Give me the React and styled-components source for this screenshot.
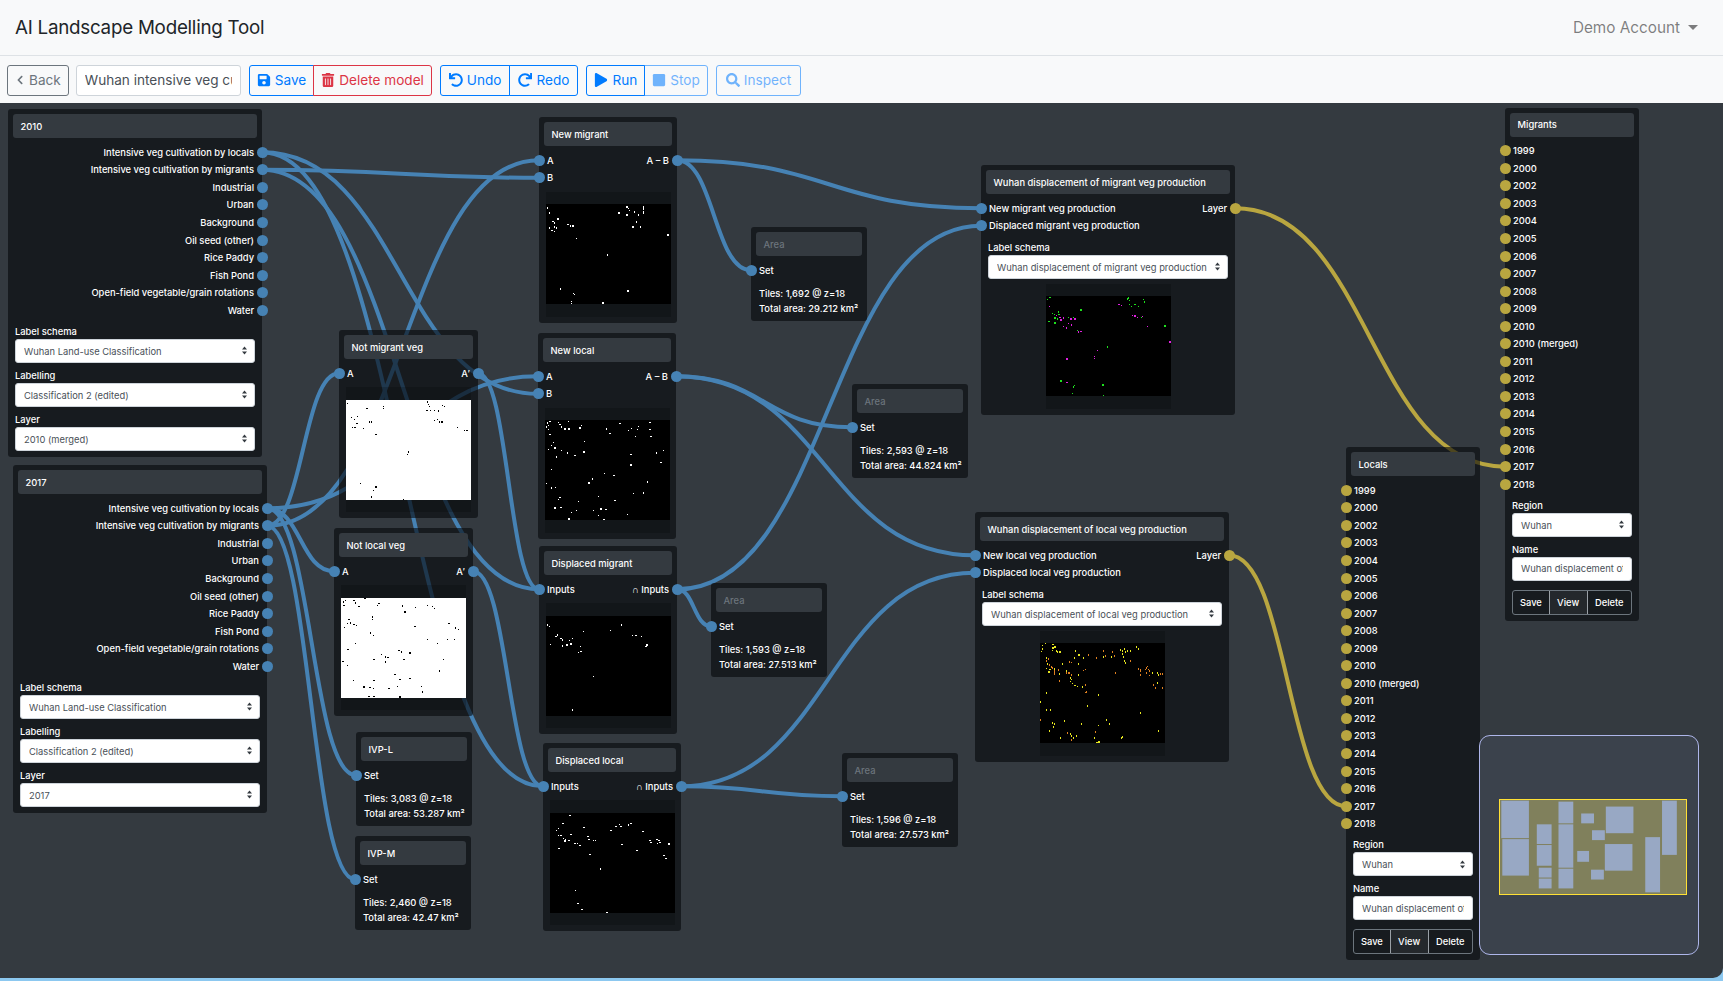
import React from 'react'
import styled, { createGlobalStyle } from 'styled-components'
import { FaChevronLeft, FaSave, FaTrashAlt, FaUndo, FaRedo, FaPlay, FaStop, FaSearch } from 'react-icons/fa'

const CANVAS_TOP = 103
const ROW_H = 17.55
const BLUE = '#4682b4'
const GOLD = '#b9a640'

const GlobalStyle = createGlobalStyle`
  * { box-sizing: border-box; }
  html, body { margin: 0; height: 100%; overflow: hidden; }
  body {
    font-family: Inter, "Liberation Sans", Arial, sans-serif;
    background: #8cc8f0;
  }
`

const Page = styled.div`
  height: 100vh;
  display: flex;
  flex-direction: column;
  padding-bottom: 3px;
`

const Navbar = styled.nav`
  height: 56px;
  flex: none;
  display: flex;
  align-items: center;
  justify-content: space-between;
  padding: 0 25px 1px 15px;
  background: #f8f9fa;
  border-bottom: 1px solid #dee2e6;
`

const Brand = styled.div`
  font-size: 18.8px;
  letter-spacing: -0.25px;
  color: #212529;
`

const Account = styled.div`
  font-size: 15.3px;
  color: rgba(0, 0, 0, 0.5);
  display: flex;
  align-items: center;
  gap: 8px;

  &::after {
    content: '';
    border-top: 5px solid rgba(0, 0, 0, 0.5);
    border-left: 5px solid transparent;
    border-right: 5px solid transparent;
  }
`

const Toolbar = styled.div`
  height: 47px;
  flex: none;
  display: flex;
  align-items: center;
  gap: 8px;
  padding: 1px 7px 0;
  background: #f8f9fa;
`

const Group = styled.div`
  display: flex;
`

const Button = styled.button`
  height: 31px;
  display: flex;
  align-items: center;
  gap: 4px;
  padding: 0 ${p => p.$pad || 7}px;
  font: inherit;
  font-size: 13.6px;
  background: transparent;
  color: ${p => p.$color || '#007bff'};
  border: 1px solid ${p => p.$color || '#007bff'};
  border-radius: 3px;
  opacity: ${p => (p.$off ? 0.55 : 1)};

  svg { font-size: ${p => p.$icon || 14}px; }

  ${Group} > & { border-radius: 0; }
  ${Group} > &:first-child { border-radius: 3px 0 0 3px; }
  ${Group} > &:last-child { border-radius: 0 3px 3px 0; margin-left: -1px; }
`

const NameInput = styled.input`
  width: 165px;
  height: 31px;
  margin-left: -1px;
  padding: 0 8px;
  font: inherit;
  font-size: 13.6px;
  color: #495057;
  background: #fff;
  border: 1px solid #ced4da;
  border-radius: 3px;
`

const Canvas = styled.main`
  flex: 1;
  position: relative;
  overflow: hidden;
  background: #343a40;
  border-bottom-right-radius: 10px;
`

const Wires = styled.svg`
  position: absolute;
  inset: 0;
  width: 100%;
  height: 100%;
`

const NodeBox = styled.section`
  position: absolute;
  left: ${p => p.$x}px;
  top: ${p => p.$y - CANVAS_TOP}px;
  width: ${p => p.$w}px;
  padding: 5px 0 6px;
  background: rgba(5, 6, 10, 0.6);
  border-radius: 3px;
  color: #fff;
  font-size: 9.35px;
  font-weight: 500;
`

const NodeTitle = styled.div`
  height: 24px;
  margin: 0 5px 5.5px;
  padding-left: 7.5px;
  display: flex;
  align-items: center;
  background: #343a40;
  border-radius: 3px;
  color: ${p => (p.$placeholder ? '#6c757d' : '#fff')};
`

const Row = styled.div`
  position: relative;
  height: ${ROW_H}px;
  display: flex;
  align-items: center;
  justify-content: ${p => p.$right ? 'flex-end' : 'space-between'};
  padding: 0 8px;
  white-space: nowrap;
`

const Handle = styled.span`
  position: absolute;
  top: 50%;
  ${p => p.$side}: -5.5px;
  width: 11px;
  height: 11px;
  margin-top: -5.5px;
  border-radius: 50%;
  background: ${p => p.$gold ? GOLD : BLUE};
`

const Fields = styled.div`
  margin: 5px 7px 0;
  display: flex;
  flex-direction: column;
  gap: 5px;
`

const Field = styled.label`
  display: flex;
  flex-direction: column;
`

const FieldLabel = styled.span`
  height: 15px;
  line-height: 15px;
`

const SelectWrap = styled.div`
  position: relative;
`

const Select = styled.select`
  width: 100%;
  height: 24px;
  padding: 1px 18px 0 8px;
  appearance: none;
  font: inherit;
  font-weight: 400;
  color: #495057;
  background: #fff;
  border: 1px solid #ced4da;
  border-radius: 3px;
`

const Arrows = styled.svg`
  position: absolute;
  right: 8px;
  top: 7.5px;
  width: 5px;
  height: 9px;
  pointer-events: none;
`

const TextInput = styled.input`
  width: 100%;
  height: 24px;
  padding: 0 8px;
  font: inherit;
  font-weight: 400;
  color: #495057;
  background: #fff;
  border: 1px solid #ced4da;
  border-radius: 3px;
`

const Actions = styled.div`
  margin: 9px 7px 0;
  height: 25px;
  display: flex;
  border: 1px solid #6c757d;
  border-radius: 3px;
  overflow: hidden;
`

const Action = styled.button`
  flex: ${p => p.$grow};
  padding: 0;
  font: inherit;
  color: #fff;
  background: ${p => (p.$active ? '#24282c' : 'transparent')};
  border: 0;
  border-left: ${p => (p.$first ? '0' : '1px solid #9aa0a6')};
`

const Thumb = styled.div`
  width: 125px;
  height: 125px;
  margin: 5px auto 0;
  display: flex;
  align-items: center;
  background: rgba(0, 0, 0, 0.18);
`

const ThumbImage = styled.svg`
  display: block;
  width: 125px;
  height: 100px;
`

const Stats = styled.div`
  margin: 7px 8px -1.5px;
  line-height: 15px;
  white-space: nowrap;
`

const Minimap = styled.aside`
  position: absolute;
  left: 1479px;
  top: ${735 - CANVAS_TOP}px;
  width: 220px;
  height: 220px;
  display: flex;
  align-items: center;
  justify-content: center;
  padding: 3px 0 0 8px;
  background: #3b424c;
  border: 1px solid #aeb6ea;
  border-radius: 11px;
`

const MiniFrame = styled.svg`
  display: block;
  width: 188px;
  height: 96px;
  background: #80805c;
  border: 1px solid #ffe135;
`

// dots traced off the reference at 3x, so one map pixel is 3 units here
const trace = (ox, oy, pts) => pts.map(([x, y]) => [x - ox, y - oy])

const thumbs = {
  newMigrant: { bg: '#000', dots: [['#fff', trace(46, 285, [[48,295],[55,310],[65,335],[70,340],[80,328],[55,355],[70,352],[75,355],[62,362],[70,366],[110,345],[118,349],[125,349],[136,386],[229,436],[263,310],[287,292],[292,296],[295,302],[287,316],[310,307],[322,316],[337,292],[337,298],[337,305],[337,310],[316,337],[305,352],[328,352],[408,376],[412,376],[88,538],[127,552],[130,555],[120,575],[120,582],[215,580],[290,544]])]] },
  newLocal: { bg: '#000', dots: [['#fff', trace(642, 303, [[648,310],[650,318],[645,322],[650,330],[655,305],[680,308],[685,315],[690,322],[700,328],[712,328],[710,305],[745,325],[750,318],[825,328],[835,342],[865,312],[890,332],[900,326],[918,330],[912,350],[920,320],[955,308],[955,330],[958,350],[655,345],[665,368],[660,378],[650,390],[670,385],[690,392],[708,400],[730,408],[758,365],[757,397],[675,412],[898,405],[898,436],[975,400],[995,393],[988,428],[660,450],[645,492],[660,505],[672,503],[685,533],[680,540],[740,545],[670,565],[688,563],[720,578],[735,573],[712,598],[785,572],[800,588],[800,530],[808,568],[823,570],[817,600],[850,543],[888,584],[905,522],[936,520],[947,487],[772,490],[783,478],[818,462],[847,468]])]] },
  dispMigrant: { bg: '#000', dots: [['#fff', trace(647, 890, [[650,915],[655,920],[675,950],[680,945],[690,955],[695,960],[725,955],[715,962],[720,972],[708,975],[695,978],[658,973],[748,980],[750,995],[742,998],[758,934],[838,931],[871,915],[905,947],[915,946],[932,950],[945,980],[948,975],[788,1070],[725,1170]])]] },
  dispLocal: { bg: '#000', dots: [['#fff', trace(57, 236, [[115,241],[94,265],[157,277],[80,280],[75,286],[88,302],[80,302],[95,310],[102,313],[112,316],[100,318],[118,298],[130,325],[138,325],[145,332],[82,340],[169,304],[172,313],[185,316],[192,316],[175,358],[207,402],[238,286],[253,274],[263,268],[268,274],[290,270],[298,265],[334,289],[271,328],[316,346],[355,316],[358,322],[376,313],[382,316],[378,325],[385,322],[412,327],[397,361],[403,370],[132,467],[139,505],[151,523],[148,535],[226,532]])]] },
  notMigrant: { bg: '#fff', dots: [['#000', trace(47, 241, [[50,250],[108,265],[158,258],[158,264],[290,245],[292,252],[295,258],[335,255],[340,258],[288,271],[298,270],[310,270],[322,272],[62,292],[70,297],[80,288],[78,310],[65,322],[72,322],[98,325],[115,305],[122,305],[135,343],[310,300],[320,298],[325,305],[333,305],[380,322],[400,331],[408,331],[232,395],[229,402],[88,490],[135,500],[128,510],[122,530],[120,540],[217,538]])]] },
  notLocal: { bg: '#fff', dots: [['#000', trace(33, 835, [[38,845],[45,840],[40,855],[70,840],[75,848],[103,835],[85,858],[145,850],[140,855],[215,857],[223,875],[255,862],[290,856],[305,858],[312,864],[125,890],[125,898],[55,898],[50,910],[60,908],[70,912],[78,915],[42,922],[253,918],[355,910],[375,923],[383,927],[120,938],[128,945],[75,970],[52,988],[290,958],[320,970],[350,958],[372,958],[205,990],[213,995],[238,998],[152,1002],[165,1010],[172,1012],[165,1025],[130,1018],[220,1018],[338,1018],[37,1023],[50,1035],[326,1052],[193,1063],[208,1078],[238,1075],[68,1080],[130,1080],[100,1100],[118,1102],[128,1105],[175,1105],[200,1098],[272,1098],[275,1115],[115,1128],[130,1128],[208,1130]])]] },
  wuhanMigrant: { bg: '#000', dots: [
    ['#1ee01e', trace(255, 441, [[258,450],[265,443],[272,492],[278,494],[290,487],[292,495],[280,505],[288,508],[320,504],[328,506],[335,504],[280,520],[262,515],[358,481],[347,543],[438,592],[500,445],[503,452],[497,448],[503,465],[510,470],[520,464],[530,470],[545,450],[548,457],[610,529],[298,694],[338,708],[335,712],[332,732],[424,706],[426,737],[540,504]])],
    ['#e020e0', trace(255, 441, [[263,470],[285,497],[295,503],[298,511],[305,505],[320,522],[330,526],[305,530],[315,535],[340,508],[328,508],[350,547],[358,545],[480,468],[472,465],[512,497],[520,499],[527,503],[542,500],[558,530],[625,577],[408,603],[398,620],[398,626],[316,628],[316,698]])],
  ] },
  wuhanLocal: { bg: '#000', dots: [
    ['#e6e620', trace(235, 72, [[250,72],[241,78],[240,88],[238,95],[272,75],[272,85],[278,82],[270,92],[282,94],[293,97],[286,97],[252,115],[255,133],[252,147],[260,157],[263,150],[276,148],[300,133],[340,94],[350,106],[337,115],[364,115],[349,133],[313,154],[291,163],[325,175],[328,180],[325,185],[331,192],[338,198],[345,200],[360,202],[349,166],[252,220],[235,247],[253,271],[265,271],[271,310],[277,313],[274,322],[262,334],[295,355],[307,304],[325,343],[328,349],[343,349],[333,355],[358,313],[376,259],[409,226],[409,318],[433,301],[442,313],[397,355],[404,370],[410,367],[478,355],[481,352],[535,280],[589,334],[474,91],[481,94],[487,88],[496,94],[505,94],[490,97],[481,103],[484,112],[487,124],[490,130],[523,82],[529,88],[424,112],[448,112],[586,160],[589,166],[586,190],[571,160]])],
    ['#e08020', trace(235, 72, [[258,118],[253,124],[262,136],[268,142],[271,145],[276,154],[276,160],[288,151],[322,127],[327,128],[313,160],[320,160],[328,166],[292,184],[364,152],[370,149],[378,106],[403,115],[424,94],[430,109],[451,97],[457,109],[505,124],[460,160],[529,148],[535,150],[535,154],[535,166],[550,150],[553,145],[556,140],[559,150],[562,154],[553,160],[562,168],[574,196],[580,205],[595,163],[601,163],[601,205],[370,218],[373,217],[370,196],[235,301],[316,340],[328,361],[400,337],[277,163]])],
  ] },
}

const LANDUSE = [
  'Intensive veg cultivation by locals', 'Intensive veg cultivation by migrants', 'Industrial', 'Urban',
  'Background', 'Oil seed (other)', 'Rice Paddy', 'Fish Pond', 'Open-field vegetable/grain rotations', 'Water',
]
const YEARS = ['1999', '2000', '2002', '2003', '2004', '2005', '2006', '2007', '2008', '2009', '2010', '2010 (merged)',
  '2011', '2012', '2013', '2014', '2015', '2016', '2017', '2018']

const landuseFields = layer => [
  { label: 'Label schema', value: 'Wuhan Land-use Classification' },
  { label: 'Labelling', value: 'Classification 2 (edited)' },
  { label: 'Layer', value: layer },
]

const nodes = {
  n2010: { x: 8, y: 109, w: 254, title: '2010', outputs: LANDUSE, fields: landuseFields('2010 (merged)') },
  n2017: { x: 13, y: 465, w: 254, title: '2017', outputs: LANDUSE, fields: landuseFields('2017') },
  notMigrant: { x: 339, y: 330, w: 139, title: 'Not migrant veg', rows: [['A', 'A′']], thumb: 'notMigrant' },
  notLocal: { x: 334, y: 528, w: 139, title: 'Not local veg', rows: [['A', 'A′']], thumb: 'notLocal' },
  newMigrant: { x: 539, y: 117, w: 138, title: 'New migrant', rows: [['A', 'A – B'], ['B']], thumb: 'newMigrant' },
  newLocal: { x: 538, y: 333, w: 138, title: 'New local', rows: [['A', 'A – B'], ['B']], thumb: 'newLocal' },
  dispMigrant: { x: 539, y: 546, w: 138, title: 'Displaced migrant', rows: [['Inputs', '∩ Inputs']], thumb: 'dispMigrant' },
  dispLocal: { x: 543, y: 743, w: 138, title: 'Displaced local', rows: [['Inputs', '∩ Inputs']], thumb: 'dispLocal' },
  ivpL: { x: 356, y: 732, w: 116, title: 'IVP-L', rows: [['Set']], stats: ['Tiles: 3,083 @ z=18', 'Total area: 53.287 km²'] },
  ivpM: { x: 355, y: 836, w: 116, title: 'IVP-M', rows: [['Set']], stats: ['Tiles: 2,460 @ z=18', 'Total area: 42.47 km²'] },
  area1: { x: 751, y: 227, w: 116, title: 'Area', placeholder: true, rows: [['Set']], stats: ['Tiles: 1,692 @ z=18', 'Total area: 29.212 km²'] },
  area2: { x: 852, y: 384, w: 116, title: 'Area', placeholder: true, rows: [['Set']], stats: ['Tiles: 2,593 @ z=18', 'Total area: 44.824 km²'] },
  area3: { x: 711, y: 583, w: 116, title: 'Area', placeholder: true, rows: [['Set']], stats: ['Tiles: 1,593 @ z=18', 'Total area: 27.513 km²'] },
  area4: { x: 842, y: 753, w: 116, title: 'Area', placeholder: true, rows: [['Set']], stats: ['Tiles: 1,596 @ z=18', 'Total area: 27.573 km²'] },
  wuhanMigrant: {
    x: 981, y: 165, w: 254, title: 'Wuhan displacement of migrant veg production',
    rows: [['New migrant veg production', 'Layer'], ['Displaced migrant veg production']], goldRight: true,
    fields: [{ label: 'Label schema', value: 'Wuhan displacement of migrant veg production' }], thumb: 'wuhanMigrant',
  },
  wuhanLocal: {
    x: 975, y: 512, w: 254, title: 'Wuhan displacement of local veg production',
    rows: [['New local veg production', 'Layer'], ['Displaced local veg production']], goldRight: true,
    fields: [{ label: 'Label schema', value: 'Wuhan displacement of local veg production' }], thumb: 'wuhanLocal',
  },
  locals: {
    x: 1346, y: 447, w: 134, title: 'Locals', years: YEARS, actions: true,
    fields: [{ label: 'Region', value: 'Wuhan' }, { label: 'Name', input: 'Wuhan displacement of local veg production' }],
  },
  migrants: {
    x: 1505, y: 107.5, w: 134, title: 'Migrants', years: YEARS, actions: true,
    fields: [{ label: 'Region', value: 'Wuhan' }, { label: 'Name', input: 'Wuhan displacement of migrant veg production' }],
  },
}

// [from node, from row, to node, to row]
const links = [
  ['n2010', 0, 'newLocal', 1], ['n2010', 0, 'dispLocal', 0],
  ['n2010', 1, 'newMigrant', 1], ['n2010', 1, 'dispMigrant', 0],
  ['n2017', 0, 'newLocal', 0], ['n2017', 0, 'notLocal', 0], ['n2017', 0, 'ivpL', 0],
  ['n2017', 1, 'newMigrant', 0], ['n2017', 1, 'notMigrant', 0], ['n2017', 1, 'ivpM', 0],
  ['notMigrant', 0, 'dispMigrant', 0], ['notLocal', 0, 'dispLocal', 0],
  ['newMigrant', 0, 'area1', 0], ['newMigrant', 0, 'wuhanMigrant', 0],
  ['newLocal', 0, 'area2', 0], ['newLocal', 0, 'wuhanLocal', 0],
  ['dispMigrant', 0, 'area3', 0], ['dispMigrant', 0, 'wuhanMigrant', 1],
  ['dispLocal', 0, 'area4', 0], ['dispLocal', 0, 'wuhanLocal', 1],
  ['wuhanMigrant', 0, 'migrants', 18, GOLD], ['wuhanLocal', 0, 'locals', 18, GOLD],
]

const rowY = (node, row) => node.y - CANVAS_TOP + 34.5 + (row + 0.5) * ROW_H

const wirePath = ([from, fromRow, to, toRow]) => {
  const a = nodes[from]
  const b = nodes[to]
  const x1 = a.x + a.w
  const y1 = rowY(a, fromRow)
  const x2 = b.x
  const y2 = rowY(b, toRow)
  const hx = Math.abs(x2 - x1) * 0.5
  return `M${x1} ${y1} C${x1 + hx} ${y1} ${x2 - hx} ${y2} ${x2} ${y2}`
}

const minimapRects = [
  [480,237,564,351],[483,354,564,465],[588,309,633,369],[588,372,633,435],[594,441,633,471],[594,474,633,504],
  [654,240,699,306],[654,309,699,441],[654,444,699,504],[723,276,762,306],[756,327,795,357],[711,390,747,423],
  [753,447,792,477],[798,255,882,336],[795,369,879,450],[918,348,963,516],[969,237,1014,402],
]

const ThumbView = ({ name }) => {
  const { bg, dots } = thumbs[name]
  return (
    <Thumb>
      <ThumbImage viewBox="0 0 375 300" shapeRendering="crispEdges" style={{ background: bg }}>
        {dots.map(([color, pts]) =>
          pts.map(([x, y]) => <rect key={color + x + '-' + y} x={x} y={y} width="4" height="4" fill={color} />)
        )}
      </ThumbImage>
    </Thumb>
  )
}

const SelectField = ({ value }) => (
  <SelectWrap>
    <Select defaultValue={value}><option>{value}</option></Select>
    <Arrows viewBox="0 0 5 9"><path d="M2.5 0.5 L5 3.5 H0 Z M2.5 8.5 L0 5.5 H5 Z" fill="#343a40" /></Arrows>
  </SelectWrap>
)

const Node = ({ node }) => (
  <NodeBox $x={node.x} $y={node.y} $w={node.w}>
    <NodeTitle $placeholder={node.placeholder}>{node.title}</NodeTitle>
    {node.outputs && node.outputs.map(label => (
      <Row key={label} $right>{label}<Handle $side="right" /></Row>
    ))}
    {node.years && node.years.map(year => (
      <Row key={year}><Handle $side="left" $gold />{year}</Row>
    ))}
    {node.rows && node.rows.map(([left, right]) => (
      <Row key={left}>
        <Handle $side="left" />
        <span>{left}</span>
        {right && <span>{right}</span>}
        {right && <Handle $side="right" $gold={node.goldRight} />}
      </Row>
    ))}
    {node.stats && <Stats>{node.stats.map(line => <div key={line}>{line}</div>)}</Stats>}
    {node.fields && (
      <Fields>
        {node.fields.map(field => (
          <Field key={field.label}>
            <FieldLabel>{field.label}</FieldLabel>
            {field.input
              ? <TextInput readOnly defaultValue={field.input} />
              : <SelectField value={field.value} />}
          </Field>
        ))}
      </Fields>
    )}
    {node.thumb && <ThumbView name={node.thumb} />}
    {node.actions && (
      <Actions>
        <Action $first $grow={37}>Save</Action>
        <Action $active $grow={38}>View</Action>
        <Action $grow={45}>Delete</Action>
      </Actions>
    )}
  </NodeBox>
)

const App = () => (
  <Page>
    <GlobalStyle />
    <Navbar>
      <Brand>AI Landscape Modelling Tool</Brand>
      <Account>Demo Account</Account>
    </Navbar>
    <Toolbar>
      <Button $color="#6c757d" $icon={10}><FaChevronLeft /> Back</Button>
      <NameInput readOnly defaultValue="Wuhan intensive veg cultivation" />
      <Group>
        <Button><FaSave /> Save</Button>
        <Button $color="#dc3545"><FaTrashAlt /> Delete model</Button>
      </Group>
      <Group>
        <Button $pad={8}><FaUndo /> Undo</Button>
        <Button $pad={8}><FaRedo /> Redo</Button>
      </Group>
      <Group>
        <Button><FaPlay /> Run</Button>
        <Button $off><FaStop /> Stop</Button>
      </Group>
      <Button $off $pad={9}><FaSearch /> Inspect</Button>
    </Toolbar>
    <Canvas>
      <Wires>
        {links.map(link => (
          <path
            key={link.slice(0, 4).join('-')}
            d={wirePath(link)}
            fill="none"
            stroke={link[4] || BLUE}
            strokeWidth="4"
          />
        ))}
      </Wires>
      {Object.keys(nodes).map(id => <Node key={id} node={nodes[id]} />)}
      <Minimap>
        <MiniFrame viewBox="478 235 562 286">
          {minimapRects.map(([x1, y1, x2, y2]) => (
            <rect key={x1 + '-' + y1} x={x1} y={y1} width={x2 - x1} height={y2 - y1} fill="#98a8c4" />
          ))}
        </MiniFrame>
      </Minimap>
    </Canvas>
  </Page>
)

export default App
